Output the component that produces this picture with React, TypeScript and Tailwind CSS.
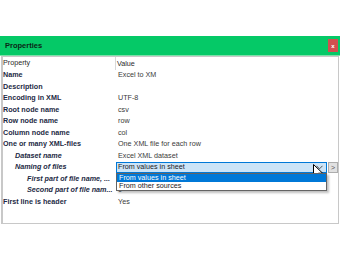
import React from 'react';

type Row = {
  label : string;
  value?: string;
  indent?: 0 | 1 | 2;
  combo?: boolean;
};

const ROWS: Row[] = [
  { label: 'Name',                           value: 'Excel to XM' },
  { label: 'Description',                    value: '' },
  { label: 'Encoding in XML',                value: 'UTF-8' },
  { label: 'Root node name',                 value: 'csv' },
  { label: 'Row node name',                  value: 'row' },
  { label: 'Column node name',               value: 'col' },
  { label: 'One or many XML-files',          value: 'One XML file for each row' },
  { label: 'Dataset name',                   value: 'Excel XML dataset', indent: 1 },
  { label: 'Naming of files',                indent: 1, combo: true },
  { label: 'First part of file name, ...',   value: '', indent: 2 },
  { label: 'Second part of file nam...',     value: '0', indent: 2 },
  { label: 'First line is header',           value: 'Yes' },
];

const INDENT = ['pl-0', 'pl-[12px] italic', 'pl-[24px] italic'];

function Cursor() {
  return (
    <svg className="absolute left-[197px] top-[2px]" width="11" height="16" viewBox="0 0 11 16">
      <path d="M0.5 0.5 L0.5 12.5 L3.5 9.8 L5.6 14.8 L7.5 14 L5.4 9.2 L9.6 9.2 Z"
            fill="#fff" stroke="#000" strokeWidth="1" strokeLinejoin="round" />
    </svg>
  );
}

function Combo() {
  return (
    <div className="relative flex h-[11px] items-stretch">
      <div className="flex w-[211px] items-center justify-between border border-[#0078d7] bg-[#cce4f7] pl-[1px] pr-[3px]">
        <span className="text-[#1a1a1a]">From values in sheet</span>
        <svg width="7" height="5" viewBox="0 0 7 5">
          <path d="M0.5 0.8 L3.5 3.8 L6.5 0.8" fill="none" stroke="#555" strokeWidth="1" />
        </svg>
      </div>
      <div className="ml-[1px] flex w-[10px] items-center justify-center border border-[#adadad] bg-[#e1e1e1] text-[7px] text-[#555]">
        &gt;
      </div>

      {/* open list */}
      <div className="absolute left-0 top-[11px] z-10 w-[211px] border border-[#646464] bg-white shadow-[2px_2px_2px_rgba(0,0,0,0.25)]">
        <div className="h-[8px] bg-[#0078d7] pl-[2px] leading-[8px] text-white">From values in sheet</div>
        <div className="h-[8px] pl-[2px] leading-[8px] text-[#1a1a1a]">From other sources</div>
      </div>

      <Cursor />
    </div>
  );
}

export default function App() {
  return (
    <div className="h-[260px] w-[340px] bg-white pt-[36px] text-[7.2px] [font-family:'Liberation_Sans',Arial,sans-serif]">
      {/* title bar */}
      <div className="flex h-[19px] items-center justify-between bg-[#05c967] pl-[5px] pr-[2px]">
        <span className="text-[7.5px] font-semibold text-[#0b2616]">Properties</span>
        <div className="flex h-[13px] w-[10px] items-center justify-center bg-[#d24f4f] text-[6px] font-bold leading-none text-white">
          x
        </div>
      </div>
      <div className="h-px bg-[#7ee0a9]" />

      {/* property grid */}
      <div className="mx-[1px] h-[168px] border border-l-2 border-[#c8c8c8] bg-white">
        <div className="grid h-[13px] grid-cols-[112px_1fr] items-center text-[#2a2a2a]">
          <span>Property</span>
          <span className="h-full border-l border-[#d8d8d8] pl-[1px] leading-[13px]">Value</span>
        </div>
        {ROWS.map(r => (
          <div key={r.label} className="grid h-[11.5px] grid-cols-[112px_1fr] items-center">
            <span className={`${INDENT[r.indent ?? 0]} truncate font-bold text-[#1d2a44]`}>{r.label}</span>
            {r.combo ? (
              <div className="pl-[1px]"><Combo /></div>
            ) : (
              <span className="pl-[3px] text-[#3a3a3a]">{r.value}</span>
            )}
          </div>
        ))}
      </div>
    </div>
  );
}
